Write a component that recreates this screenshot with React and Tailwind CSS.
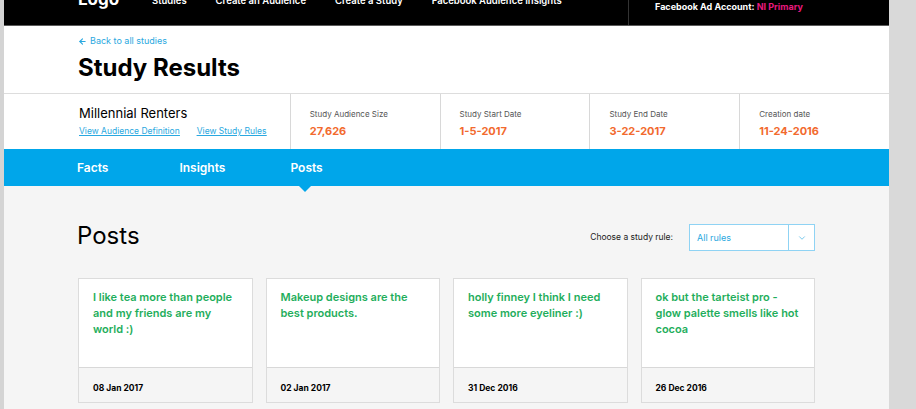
import { ArrowLeft, ChevronDown } from "lucide-react";

const stats = [
  { label: "Study Audience Size", value: "27,626" },
  { label: "Study Start Date", value: "1-5-2017" },
  { label: "Study End Date", value: "3-22-2017" },
  { label: "Creation date", value: "11-24-2016" },
];

const posts = [
  { text: "I like tea more than people and my friends are my world :)", date: "08 Jan 2017" },
  { text: "Makeup designs are the best products.", date: "02 Jan 2017" },
  { text: "holly finney I think I need some more eyeliner :)", date: "31 Dec 2016" },
  { text: "ok but the tarteist pro - glow palette smells like hot cocoa", date: "26 Dec 2016" },
];

const navLinks = ["Studies", "Create an Audience", "Create a Study", "Facebook Audience Insights"];

const App = () => {
  return (
    <div
      className="flex h-[409px] overflow-hidden bg-[#d9d9d9]"
      style={{ fontFamily: "Inter, 'Open Sans', sans-serif" }}
    >
      <div className="w-[4px] shrink-0 bg-[#d4d4d4]" />

      <div className="w-[885px] shrink-0 flex flex-col bg-[#f5f5f5]">
        {/* Top nav, page is scrolled so only its lower part shows */}
        <div className="h-[26px] shrink-0 bg-black border-b border-[#5a5a5a] flex overflow-hidden">
          <div className="flex items-start pl-[74px] text-white">
            <span className="w-[36px] text-[17px] leading-[18px] font-bold -mt-[10px]">Logo</span>
            <div className="flex gap-[29px] ml-[38px]">
              {navLinks.map((l) => (
                <span key={l} className="text-[9.5px] leading-[12px] font-semibold -mt-[5px]">{l}</span>
              ))}
            </div>
          </div>
          <div className="ml-auto w-[261px] border-l border-[#333] flex items-start pl-[26px] pt-[1px]">
            <span className="text-[9px] leading-[12px] font-bold text-white">
              Facebook Ad Account: <span className="text-[#e8197d]">NI Primary</span>
            </span>
          </div>
        </div>

        {/* Header */}
        <div className="h-[68px] shrink-0 bg-white border-b border-[#dddddd] pl-[74px] pt-[9px]">
          <a className="flex items-center gap-[3px] text-[9px] leading-[12px] text-[#29a8e0]">
            <ArrowLeft size={9} strokeWidth={3} />
            Back to all studies
          </a>
          <h1 className="mt-[7px] text-[24px] leading-[28px] font-bold text-black">Study Results</h1>
        </div>

        {/* Stats row */}
        <div className="h-[55px] shrink-0 bg-white flex">
          <div className="w-[286px] pl-[75px] pt-[11px]">
            <p className="text-[13px] leading-[16px] text-black">Millennial Renters</p>
            <div className="flex gap-[17px] mt-[4px] text-[8.5px] leading-[12px] text-[#29a8e0] underline">
              <a>View Audience Definition</a>
              <a>View Study Rules</a>
            </div>
          </div>
          {stats.map((s) => (
            <div key={s.label} className="w-[150px] border-l border-[#d8d8d8] pl-[19px] pt-[15px]">
              <p className="text-[8px] leading-[10px] text-[#555]">{s.label}</p>
              <p className="mt-[5px] text-[11px] leading-[14px] font-bold text-[#f26a2e]">{s.value}</p>
            </div>
          ))}
        </div>

        {/* Tabs */}
        <div className="h-[37px] shrink-0 bg-[#00a6ea] flex items-center pl-[73px] text-white text-[12px] font-semibold">
          <span>Facts</span>
          <span className="ml-[71px]">Insights</span>
          <span className="ml-[65px] relative">
            Posts
            <span className="absolute left-[8px] top-[26px] w-0 h-0 border-l-[7px] border-r-[7px] border-t-[7px] border-l-transparent border-r-transparent border-t-[#00a6ea]" />
          </span>
        </div>

        {/* Content */}
        <div className="flex-1 pl-[73px] pr-[74px] pt-[34px]">
          <div className="flex items-center justify-between">
            <h2 className="text-[24px] leading-[30px] text-black">Posts</h2>
            <div className="flex items-center gap-[16px] mt-[4px]">
              <span className="text-[8.5px] text-[#222]">Choose a study rule:</span>
              <div className="w-[126px] h-[27px] bg-white border border-[#8fd3f4] flex">
                <span className="flex-1 pl-[7px] flex items-center text-[9px] text-[#29a8e0]">All rules</span>
                <span className="w-[26px] border-l border-[#8fd3f4] flex items-center justify-center text-[#29a8e0]">
                  <ChevronDown size={10} strokeWidth={1.5} />
                </span>
              </div>
            </div>
          </div>

          <div className="mt-[27px] flex gap-[13px] pl-[1px]">
            {posts.map((p) => (
              <div key={p.date} className="w-[175px] border border-[#dcdcdc] bg-white">
                <div className="h-[89px] px-[14px] pt-[10px] border-b border-[#d8d8d8]">
                  <p className="text-[11px] leading-[16px] font-semibold text-[#1fae5c]">{p.text}</p>
                </div>
                <div className="h-[34px] bg-[#f5f5f5] pl-[14px] pt-[6px] flex items-center">
                  <span className="text-[8.5px] font-bold text-black">{p.date}</span>
                </div>
              </div>
            ))}
          </div>
        </div>
      </div>

      <div className="flex-1 bg-[#d9d9d9]" />
    </div>
  );
};

export default App;
